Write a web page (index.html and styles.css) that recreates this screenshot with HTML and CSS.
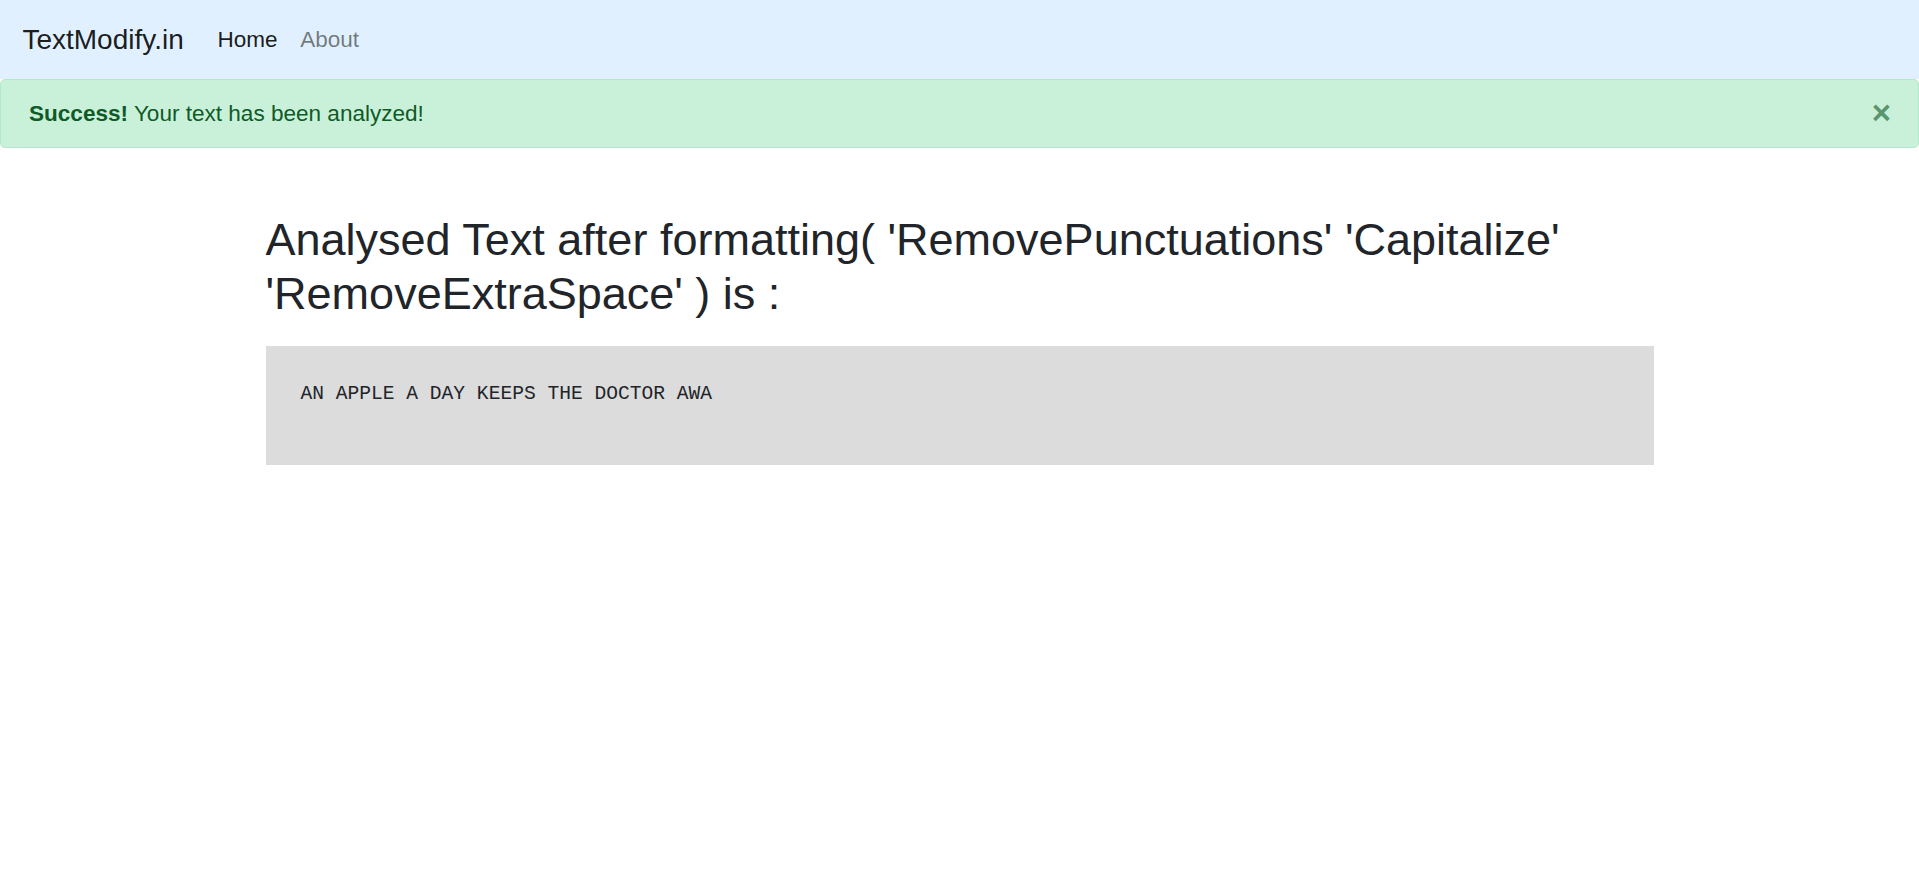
FILE: index.html
```html
<!DOCTYPE html>
<html lang="en">
<head>
<meta charset="utf-8">
<title>TextModify.in</title>
<link rel="stylesheet" href="styles.css">
</head>
<body>
<nav class="navbar">
  <a class="brand" href="#">TextModify.in</a>
  <ul class="nav">
    <li><a class="nav-link active" href="#">Home</a></li>
    <li><a class="nav-link" href="#">About</a></li>
  </ul>
</nav>
<div class="alert">
  <span><strong>Success!</strong> Your text has been analyzed!</span>
  <button class="close" type="button" aria-label="Close">&times;</button>
</div>
<main class="container">
  <h2 class="title">Analysed Text after formatting( 'RemovePunctuations' 'Capitalize' 'RemoveExtraSpace' ) is :</h2>
  <div class="result"><pre class="result-text">AN APPLE A DAY KEEPS THE DOCTOR AWA</pre></div>
</main>
</body>
</html>
```
FILE: styles.css
```css
* { box-sizing: border-box; }
html, body { margin: 0; padding: 0; }
body {
  font-family: "Liberation Sans", Arial, sans-serif;
  color: #212529;
  background: #fff;
}
.navbar {
  height: 79px;
  padding: 0 22.4px;
  display: flex;
  align-items: center;
  background: #e0f0fe;
}
.brand {
  font-size: 28px;
  line-height: 42px;
  color: rgba(0,0,0,.9);
  text-decoration: none;
  margin-right: 22.4px;
}
.nav {
  list-style: none;
  margin: 0;
  padding: 0;
  display: flex;
}
.nav-link {
  display: block;
  padding: 11.2px 11.4px;
  font-size: 22.5px;
  line-height: 33.6px;
  color: rgba(0,0,0,.5);
  text-decoration: none;
}
.nav-link.active { color: rgba(0,0,0,.9); }
.alert {
  position: relative;
  height: 69px;
  padding: 16.5px 28px;
  font-size: 22.55px;
  line-height: 33.6px;
  color: #0f5a27;
  background: #c9f1da;
  border: 1px solid #b4e8c8;
  border-radius: 5px;
}
.alert strong { font-weight: 700; }
.close {
  position: absolute;
  top: 0;
  right: 0;
  padding: 16px 27px;
  border: 0;
  background: transparent;
  font-family: "Liberation Sans", Arial, sans-serif;
  font-size: 33px;
  font-weight: 700;
  line-height: 33px;
  color: #0f5a27;
  opacity: .6;
  cursor: pointer;
}
.container {
  width: 1388px;
  margin: 0 auto;
  padding-top: 65px;
}
.title {
  margin: 0 0 25px;
  font-size: 45px;
  font-weight: 400;
  line-height: 54px;
}
.result {
  height: 119px;
  padding: 34px 34px 34px 35px;
  background: #dcdcdc;
}
.result-text {
  margin: 0;
  font-family: "Liberation Mono", "Courier New", monospace;
  font-size: 19.6px;
  line-height: 28px;
  color: #212529;
}
```
